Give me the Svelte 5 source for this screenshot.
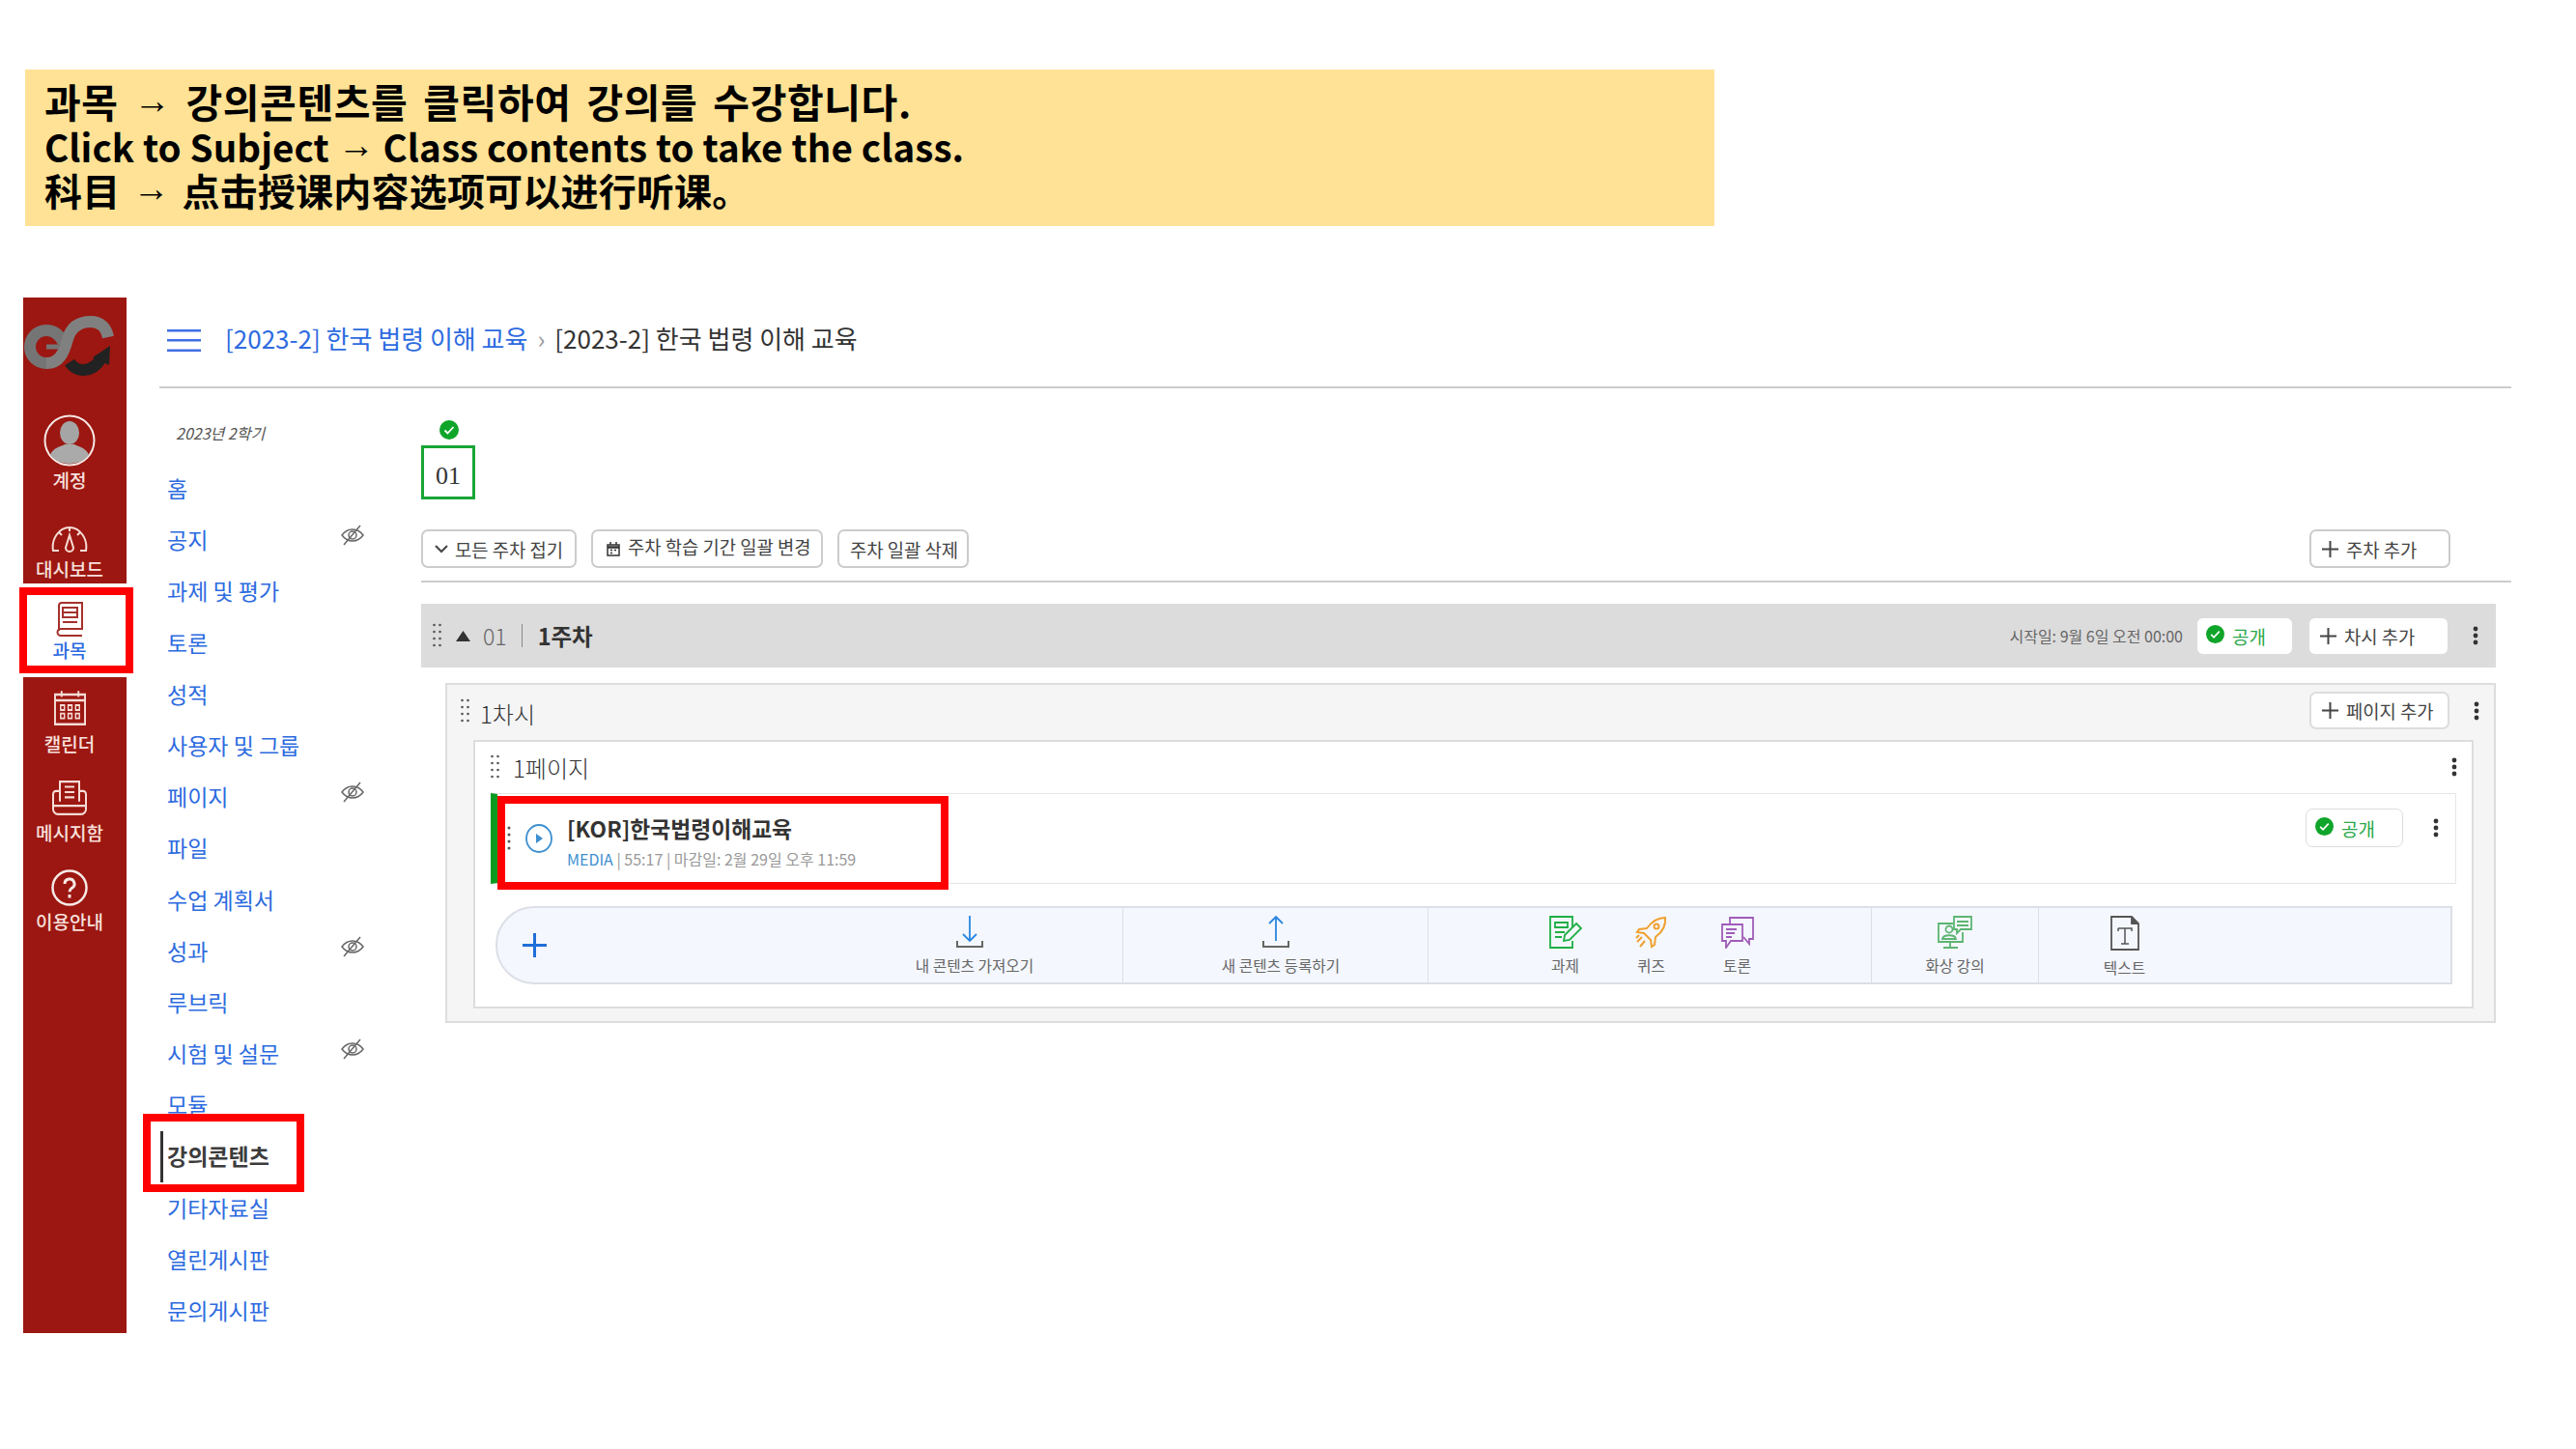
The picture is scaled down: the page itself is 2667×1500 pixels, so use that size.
<script lang="ts">
  const menu = [
    { label: "홈" },
    { label: "공지", hidden: true },
    { label: "과제 및 평가" },
    { label: "토론" },
    { label: "성적" },
    { label: "사용자 및 그룹" },
    { label: "페이지", hidden: true },
    { label: "파일" },
    { label: "수업 계획서" },
    { label: "성과", hidden: true },
    { label: "루브릭" },
    { label: "시험 및 설문", hidden: true },
    { label: "모듈" },
    { label: "강의콘텐츠", active: true },
    { label: "기타자료실" },
    { label: "열린게시판" },
    { label: "문의게시판" },
  ];
</script>

{#snippet handle()}
  <svg class="handle" width="9" height="26" viewBox="0 0 9 26" fill="#555">
    {#each [2, 9, 16, 23] as y}
      <circle cx="1.5" cy={y} r="1.3" /><circle cx="7.5" cy={y} r="1.3" />
    {/each}
  </svg>
{/snippet}

{#snippet kebab()}
  <svg class="kebab" width="6" height="20" viewBox="0 0 6 20" fill="#333">
    <circle cx="3" cy="3" r="2.4" /><circle cx="3" cy="10" r="2.4" /><circle cx="3" cy="17" r="2.4" />
  </svg>
{/snippet}

{#snippet check(size)}
  <svg width={size} height={size} viewBox="0 0 20 20">
    <circle cx="10" cy="10" r="10" fill="#0fa52a" />
    <path d="M5.5 10.5l3 3 6-6.5" fill="none" stroke="#fff" stroke-width="1.8" />
  </svg>
{/snippet}

{#snippet plus()}
  <svg width="17" height="17" viewBox="0 0 17 17" stroke="#444" stroke-width="2"><path d="M8.5 0v17M0 8.5h17" /></svg>
{/snippet}

{#snippet eye()}
  <svg width="24" height="22" viewBox="0 0 24 22" fill="none" stroke="#666" stroke-width="1.5">
    <path d="M1 11c3-4 7-6 11-6s8 2 11 6c-3 4-7 6-11 6s-8-2-11-6z" />
    <circle cx="12" cy="11" r="4" />
    <path d="M20 1L3 21" />
  </svg>
{/snippet}

<div class="page">
  <div class="banner">
    <p class="ko">과목 <span class="arrow">→</span> 강의콘텐츠를 클릭하여 강의를 수강합니다.</p>
    <p class="en">Click to Subject <span class="arrow">→</span> Class contents to take the class.</p>
    <p class="zh" lang="zh-CN">科目 <span class="arrow">→</span> 点击授课内容选项可以进行听课。</p>
  </div>

  <div class="app">
    <nav class="rail">
      <div class="logo">
        <svg width="96" height="70" viewBox="0 0 96 70" fill="none">
          <path d="M24 51A17 17 0 1 1 24 17C32 17 38 22 42 30" stroke="#757575" stroke-width="12" />
          <path d="M24 51C38 51 42 40 46 26C50 12 60 8 70 8C80 8 86 14 88 24" stroke="#808080" stroke-width="12" />
          <path d="M37 34H24" stroke="#757575" stroke-width="5" />
          <path d="M48 50C56 62 72 60 80 47" stroke="#222" stroke-width="12" />
          <path d="M72 45L90 33L89 53z" fill="#222" />
        </svg>
      </div>

      <div class="rail-item account">
        <svg width="54" height="54" viewBox="0 0 54 54">
          <circle cx="27" cy="27" r="25.5" fill="none" stroke="#f6e9e6" stroke-width="2" />
          <ellipse cx="27" cy="19" rx="10" ry="12" fill="#a5a5a5" />
          <path d="M7 42c3-8 12-9 15-11h10c3 2 12 3 15 11-5 6-12 9-20 9s-15-3-20-9z" fill="#aaa" />
        </svg>
        <span>계정</span>
      </div>

      <div class="rail-item dash">
        <svg width="38" height="28" viewBox="0 0 38 28" fill="none" stroke="#f6dcd6" stroke-width="2">
          <path d="M8 26H2C0 14 8 2 19 2s19 12 17 24h-6" />
          <path d="M19 10l4 13a4 4 0 0 1-8 0z" />
          <path d="M19 2v4M8 7l3 3M30 7l-3 3" />
        </svg>
        <span>대시보드</span>
      </div>

      <div class="rail-item course">
        <svg width="30" height="36" viewBox="0 0 30 36" fill="none" stroke="#a5312c" stroke-width="2">
          <path d="M4 30V4a3 3 0 0 1 3-3h21v27H6a3.500 3.500 0 0 0 0 7h22" />
          <path d="M8 6h15v10H8zM8 11h15M8 21h15" />
        </svg>
        <span>과목</span>
        <i class="mark"></i>
      </div>

      <div class="rail-item cal">
        <svg width="33" height="37" viewBox="0 0 34 30" preserveAspectRatio="none" fill="none" stroke="#f6dcd6" stroke-width="2">
          <path d="M1 4h32v25H1zM1 9h32M8 1v5M26 1v5" />
          <path d="M7 13h4v4H7zM15 13h4v4h-4zM23 13h4v4h-4zM7 20h4v4H7zM15 20h4v4h-4zM23 20h4v4h-4z" stroke-width="1.500" />
        </svg>
        <span>캘린더</span>
      </div>

      <div class="rail-item msg">
        <svg width="38" height="37" viewBox="0 0 38 34" preserveAspectRatio="none" fill="none" stroke="#f6dcd6" stroke-width="2">
          <path d="M9 20V1h20v19M14 6h10M14 11h10M14 16h10" />
          <path d="M9 10H5a3 3 0 0 0-3 3v14a5 5 0 0 0 5 5h24a5 5 0 0 0 5-5V13a3 3 0 0 0-3-3h-4" />
          <path d="M2 24h34" />
        </svg>
        <span>메시지함</span>
      </div>

      <div class="rail-item help">
        <svg width="38" height="38" viewBox="0 0 38 38" fill="none" stroke="#f6e9e6" stroke-width="2.500">
          <circle cx="19" cy="19" r="17.500" />
          <path d="M14 15a5 5 0 1 1 7.500 4.300c-1.500 1-2.500 2-2.500 4" stroke-width="3" />
          <path d="M19 26v3.500" stroke-width="3" />
        </svg>
        <span>이용안내</span>
      </div>
    </nav>

    <div class="main">
      <header class="crumbs">
        <svg class="burger" width="35" height="23" viewBox="0 0 35 23" fill="#3f6ee6">
          <rect width="35" height="2.500" /><rect y="10" width="35" height="2.500" /><rect y="20.500" width="35" height="2.500" />
        </svg>
        <span class="crumb-link">[2023-2] 한국 법령 이해 교육</span>
        <span class="crumb-sep">›</span>
        <span class="crumb-now">[2023-2] 한국 법령 이해 교육</span>
      </header>

      <div class="body">
        <aside class="menu">
          <div class="term">2023년 2학기</div>
          {#each menu as item}
            <div class="menu-item" class:active={item.active}>
              <span>{item.label}</span>
              {#if item.hidden}
                <span class="eye">{@render eye()}</span>
              {/if}
              {#if item.active}
                <i class="mark"></i>
              {/if}
            </div>
          {/each}
        </aside>

        <section class="content">
          <div class="week-nav">
            <span class="week-check">{@render check(20)}</span>
            <div class="week-tile">01</div>
          </div>

          <div class="actions">
            <button class="btn w1">
              <svg width="14" height="9" viewBox="0 0 14 9" fill="none" stroke="#444" stroke-width="2"><path d="M1 1l6 6 6-6" /></svg>
              모든 주차 접기
            </button>
            <button class="btn w2">
              <svg width="14" height="15" viewBox="0 0 14 15" fill="none" stroke="#333" stroke-width="1.500">
                <path d="M1 3h12v11H1zM4 0v3M10 0v3" /><path d="M1 5.500h12" stroke-width="2.500" />
                <path d="M4 8.500h2M8 8.500h2M4 11.500h2" />
              </svg>
              <span class="raised">주차 학습 기간 일괄 변경</span>
            </button>
            <button class="btn w3">주차 일괄 삭제</button>
            <button class="btn add add-week">{@render plus()} 주차 추가</button>
          </div>

          <div class="week-bar">
            {@render handle()}
            <svg class="caret" width="15" height="11" viewBox="0 0 15 11" fill="#333"><path d="M7.500 0L15 11H0z" /></svg>
            <span class="week-no">01</span>
            <span class="week-sep"></span>
            <strong>1주차</strong>
            <span class="start">시작일: 9월 6일 오전 00:00</span>
            <span class="badge">{@render check(19)} <em>공개</em></span>
            <button class="btn add row-add">{@render plus()} 차시 추가</button>
            {@render kebab()}
          </div>

          <div class="lesson">
            <div class="lesson-head">
              {@render handle()}
              <span class="lesson-title">1차시</span>
              <button class="btn add row-add">{@render plus()} 페이지 추가</button>
              {@render kebab()}
            </div>

            <div class="sheet">
              <div class="sheet-head">
                {@render handle()}
                <span class="lesson-title">1페이지</span>
                {@render kebab()}
              </div>

              <div class="item">
                <svg class="item-grip" width="4" height="26" viewBox="0 0 4 26" fill="#555">
                  {#each [2, 9, 16, 23] as y}<circle cx="2" cy={y} r="1.500" />{/each}
                </svg>
                <svg class="play" width="28" height="30" viewBox="0 0 28 30" fill="none">
                  <ellipse cx="14" cy="15" rx="13" ry="14" stroke="#3d8fd0" stroke-width="1.800" />
                  <path d="M11 10l7 5-7 5z" fill="#3d8fd0" />
                </svg>
                <div class="item-text">
                  <div class="item-title">[KOR]한국법령이해교육</div>
                  <div class="item-meta"><b>MEDIA</b> | 55:17 | 마감일: 2월 29일 오후 11:59</div>
                </div>
                <span class="badge item-badge">{@render check(19)} <em>공개</em></span>
                {@render kebab()}
                <i class="mark"></i>
              </div>

              <div class="tools">
                <div class="seg seg1">
                  <svg class="tool-plus" width="25" height="25" viewBox="0 0 25 25" stroke="#1f6fd8" stroke-width="3"><path d="M12.500 0v25M0 12.500h25" /></svg>
                  <div class="tool import">
                    <svg width="28" height="34" viewBox="0 0 28 34" fill="none" stroke="#2a86e0" stroke-width="1.800">
                      <path d="M14 0v26M7 19l7 7 7-7" />
                      <path d="M1 26v6h26v-6" stroke="#666" stroke-width="2" />
                    </svg>
                    <span>내 콘텐츠 가져오기</span>
                  </div>
                </div>
                <div class="seg seg2">
                  <div class="tool export">
                    <svg width="28" height="34" viewBox="0 0 28 34" fill="none" stroke="#2a86e0" stroke-width="1.800">
                      <path d="M14 26V1M7 8l7-7 7 7" />
                      <path d="M1 26v6h26v-6" stroke="#666" stroke-width="2" />
                    </svg>
                    <span>새 콘텐츠 등록하기</span>
                  </div>
                </div>
                <div class="seg seg3">
                  <div class="tool small">
                    <svg width="34" height="34" viewBox="0 0 34 34" fill="none" stroke="#1fae45" stroke-width="1.800">
                      <path d="M24 12V1H1v32h23v-7" />
                      <path d="M6 7h13v5H6zM6 17h10M6 22h7" />
                      <path d="M28 8l5 5-12 12-6 1 1-6z" />
                    </svg>
                    <span>과제</span>
                  </div>
                  <div class="tool small">
                    <svg width="34" height="34" viewBox="0 0 34 34" fill="none" stroke="#f0a030" stroke-width="2">
                      <path d="M31 2c-8 0-14 4-19 11l-8 1-2 3 7 1 7 7 1 7 3-2 1-8c7-5 11-11 10-20z" />
                      <circle cx="22" cy="11" r="2.500" />
                      <path d="M7 22l-5 5M10 26l-5 6M4 20l-3 3" />
                    </svg>
                    <span>퀴즈</span>
                  </div>
                  <div class="tool small">
                    <svg width="34" height="34" viewBox="0 0 34 34" fill="none" stroke="#a05cb8" stroke-width="1.800">
                      <path d="M1 9h21v17H10l-5 7v-7H1z" />
                      <path d="M9 9V2h24v22h-4v5l-6-7" />
                      <path d="M5 14h11M5 18h9M5 22h6" />
                    </svg>
                    <span>토론</span>
                  </div>
                </div>
                <div class="seg seg4">
                  <div class="tool small">
                    <svg width="36" height="34" viewBox="0 0 36 34" fill="none" stroke="#5cb572" stroke-width="1.800">
                      <path d="M16 8H1v19h25V17" />
                      <path d="M17 1h18v13H24l-4 4v-4h-3z" />
                      <path d="M20 6h12M20 10h12" />
                      <circle cx="12" cy="14" r="3.500" />
                      <path d="M5 24c1-5 13-5 14 0zM13 27v5M6 33h15" />
                    </svg>
                    <span>화상 강의</span>
                  </div>
                </div>
                <div class="seg seg5">
                  <div class="tool small">
                    <svg width="30" height="36" viewBox="0 0 30 36" fill="none" stroke="#555" stroke-width="1.800">
                      <path d="M1 1h21l7 7v27H1z" />
                      <path d="M22 1v7h7" fill="#555" />
                      <path d="M8 13h14v3M8 16v-3M15 13v16M11 29h8" stroke-width="1.500" />
                    </svg>
                    <span>텍스트</span>
                  </div>
                </div>
              </div>
            </div>
          </div>
        </section>
      </div>
    </div>
  </div>
</div>

<style>
  :global(body) {
    margin: 0;
    background: #fff;
  }

  .page {
    width: 2667px;
    height: 1500px;
    overflow: hidden;
    font-family: "Noto Sans CJK KR", "Noto Sans", sans-serif;
    color: #333;
    padding-top: 72px;
    box-sizing: border-box;
  }

  .banner {
    width: 1749px;
    height: 162px;
    margin-left: 26px;
    padding: 9px 0 0 20px;
    box-sizing: border-box;
    background: #ffe295;
    color: #000;
    font-size: 41px;
    font-weight: 700;
  }

  .banner p {
    margin: 0;
    height: 47px;
    line-height: 47px;
    white-space: nowrap;
  }

  .banner .arrow {
    position: relative;
    top: -5px;
    font-family: "Liberation Sans", sans-serif;
    font-size: 38px;
    font-weight: 700;
    letter-spacing: 0;
  }

  .banner .ko {
    word-spacing: 6px;
    letter-spacing: 0.6px;
  }

  .banner .en {
    font-size: 38.500px;
    letter-spacing: 0.1px;
  }

  .banner .zh {
    margin-top: -2px;
    font-family: "Noto Sans CJK SC", sans-serif;
    font-size: 39px;
    font-weight: 700;
    word-spacing: 4px;
    letter-spacing: 0.2px;
  }

  .app {
    display: flex;
    height: 1072px;
    margin: 74px 0 0 24px;
  }

  /* left red rail */
  .rail {
    width: 107px;
    flex-shrink: 0;
    background: #9c1711;
    display: flex;
    flex-direction: column;
  }

  .logo {
    height: 85px;
    padding-top: 17px;
    box-sizing: border-box;
    margin-bottom: 36px;
  }

  .logo svg {
    display: block;
  }

  .rail-item {
    position: relative;
    display: flex;
    flex-direction: column;
    align-items: center;
    padding-right: 11px;
    box-sizing: border-box;
    color: #f8e0dc;
    font-size: 19px;
    line-height: 24px;
    font-weight: 500;
  }

  .rail-item svg {
    display: block;
  }

  .account {
    height: 115px;
  }

  .account span {
    margin-top: 2px;
  }

  .dash {
    height: 60px;
  }

  .dash span {
    margin-top: 5px;
  }

  .course {
    height: 97px;
    padding-top: 19px;
    background: #fff;
    color: #2d6be0;
  }

  .course span {
    margin-top: 2px;
  }

  .course .mark {
    inset: 4px -7px 4px -4px;
  }

  .cal {
    height: 93px;
    padding-top: 13px;
  }

  .cal span {
    margin-top: 7px;
  }

  .msg {
    height: 93px;
    padding-top: 14px;
  }

  .msg span {
    margin-top: 5px;
  }

  .help {
    padding-top: 13px;
  }

  .help span {
    margin-top: 4px;
  }

  /* red annotation frames */
  .mark {
    position: absolute;
    border: 8px solid #f00;
    pointer-events: none;
    box-sizing: border-box;
  }

  .main {
    width: 2435px;
    margin-left: 34px;
    flex-shrink: 0;
  }

  .crumbs {
    height: 94px;
    box-sizing: border-box;
    border-bottom: 2px solid #ccc;
    display: flex;
    align-items: center;
    padding: 0 0 4px 8px;
    font-size: 26px;
    font-weight: 400;
    white-space: nowrap;
  }

  .crumbs span {
    margin-bottom: 6px;
  }

  .burger {
    margin-right: 25px;
  }

  .crumb-link {
    color: #2d6be0;
  }

  .crumb-sep {
    margin: 0 10px 6px 10px;
    color: #999;
  }

  .crumb-now {
    color: #333;
  }

  .body {
    display: flex;
  }

  .menu {
    width: 271px;
    flex-shrink: 0;
    padding-left: 8px;
    box-sizing: border-box;
  }

  .term {
    height: 77px;
    padding: 34px 0 0 9px;
    box-sizing: border-box;
    font-size: 16px;
    line-height: 24px;
    font-style: italic;
    color: #555;
  }

  .menu-item {
    position: relative;
    height: 53.200px;
    line-height: 53.200px;
    font-size: 23px;
    color: #2d6be0;
    white-space: nowrap;
  }

  .menu-item.active {
    color: #3c3c3c;
    font-weight: 700;
  }

  .menu-item.active::before {
    content: "";
    position: absolute;
    left: -7px;
    top: 1px;
    bottom: 0;
    width: 3px;
    background: #333;
  }

  .menu-item .mark {
    left: -25px;
    top: -17px;
    width: 167px;
    height: 81px;
  }

  .eye {
    position: absolute;
    left: 180px;
    top: 11px;
    line-height: 0;
  }

  .content {
    flex: 1;
    min-width: 0;
  }

  .week-nav {
    padding-top: 33px;
  }

  .week-check {
    display: block;
    width: 20px;
    height: 20px;
    margin: 0 0 6px 19px;
  }

  .week-check svg {
    display: block;
  }

  .week-tile {
    width: 56px;
    height: 56px;
    box-sizing: border-box;
    border: 3px solid #19a536;
    font-family: "Liberation Serif", serif;
    font-size: 26px;
    color: #333;
    display: flex;
    align-items: center;
    justify-content: center;
    padding-top: 8px;
  }

  .actions {
    display: flex;
    margin-top: 31px;
    padding-bottom: 13px;
    border-bottom: 2px solid #ccc;
  }

  .btn {
    height: 40px;
    box-sizing: border-box;
    background: #fff;
    border: 2px solid #ccc;
    border-radius: 7px;
    font-family: inherit;
    font-size: 18.800px;
    font-weight: 400;
    color: #444;
    display: flex;
    align-items: center;
    padding: 0;
    white-space: nowrap;
  }

  .w1 {
    width: 161px;
    padding-left: 12px;
    gap: 7px;
  }

  .w2 {
    width: 240px;
    margin-left: 15px;
    padding-left: 14px;
    gap: 8px;
  }

  .raised {
    position: relative;
    top: -3px;
  }

  .w3 {
    width: 136px;
    margin-left: 15px;
    padding-left: 11px;
  }

  .add {
    gap: 8px;
    padding-left: 11px;
  }

  .add svg {
    flex-shrink: 0;
  }

  .add-week {
    width: 146px;
    margin-left: auto;
    margin-right: 63px;
  }

  .week-bar {
    height: 66px;
    margin: 22px 16px 0 0;
    background: #dcdcdc;
    display: flex;
    align-items: center;
    padding: 0 18px 0 12px;
    box-sizing: border-box;
  }

  .handle {
    flex-shrink: 0;
  }

  .caret {
    margin-left: 15px;
  }

  .week-no {
    margin-left: 13px;
    font-size: 23px;
    color: #666;
    font-weight: 300;
  }

  .week-sep {
    width: 1px;
    height: 24px;
    background: #888;
    margin: 0 16px 0 15px;
  }

  .week-bar strong {
    font-size: 23.500px;
    font-weight: 700;
    color: #333;
  }

  .start {
    margin-left: auto;
    font-size: 16px;
    color: #666;
    white-space: nowrap;
  }

  .badge {
    width: 100px;
    height: 39px;
    box-sizing: border-box;
    margin-left: 14px;
    background: #fff;
    border: 1px solid #ddd;
    border-radius: 7px;
    display: flex;
    align-items: center;
    padding-left: 9px;
    gap: 8px;
  }

  .badge svg {
    margin-top: -4px;
  }

  .badge em {
    font-style: normal;
    font-size: 19px;
    color: #2aa84a;
  }

  .row-add {
    width: 145px;
    height: 39px;
    margin-left: 16px;
    border-width: 1px;
    border-color: #ddd;
  }

  .kebab {
    flex-shrink: 0;
    margin-left: 25px;
  }

  .lesson {
    margin: 16px 16px 0 25px;
    height: 352px;
    box-sizing: border-box;
    background: #f5f5f5;
    border: 2px solid #ddd;
  }

  .lesson-head {
    height: 57px;
    display: flex;
    align-items: center;
    padding: 0 15px 4px 14px;
    box-sizing: border-box;
  }

  .lesson-head .row-add {
    margin-left: auto;
    border-width: 2px;
  }

  .lesson-title {
    margin-left: 11px;
    padding-top: 6px;
    font-size: 24px;
    font-weight: 300;
    color: #333;
  }

  .sheet {
    height: 278px;
    margin: 0 21px 0 27px;
    box-sizing: border-box;
    background: #fff;
    border: 2px solid #ddd;
  }

  .sheet-head {
    height: 53px;
    display: flex;
    align-items: center;
    padding: 0 15px 2px 16px;
    box-sizing: border-box;
  }

  .sheet-head .lesson-title {
    margin-left: 14px;
    padding-top: 2px;
  }

  .sheet-head .kebab {
    margin-left: auto;
  }

  .item {
    position: relative;
    height: 94px;
    margin: 0 16px;
    box-sizing: border-box;
    border: 1px solid #e6e6e6;
    border-left: 7px solid #0b9a20;
    display: flex;
    align-items: center;
    padding-right: 17px;
  }

  .item-grip {
    margin-left: 10px;
    flex-shrink: 0;
  }

  .play {
    margin-left: 15px;
    flex-shrink: 0;
  }

  .item-text {
    margin-left: 15px;
    padding-top: 6px;
  }

  .item-title {
    font-size: 22.800px;
    line-height: 33px;
    margin-bottom: 3px;
    font-weight: 700;
    color: #333;
    white-space: nowrap;
  }

  .item-meta {
    font-size: 16px;
    line-height: 24px;
    color: #999;
    white-space: nowrap;
  }

  .item-meta b {
    font-weight: 400;
    color: #3d8fd0;
  }

  .item-badge {
    margin: -22px 0 0 auto;
    width: 101px;
    height: 40px;
  }

  .item-badge + .kebab {
    margin: -22px 0 0 31px;
  }

  .item .mark {
    left: 0;
    top: 2px;
    width: 467px;
    height: 97px;
  }

  .tools {
    height: 81px;
    margin: 23px 20px 0 21px;
    box-sizing: border-box;
    background: #f4f7fd;
    border: 2px solid #dcdfe6;
    border-radius: 40px 0 0 40px;
    display: flex;
    font-size: 15.700px;
    color: #666;
  }

  .seg {
    display: flex;
    align-items: stretch;
    box-sizing: border-box;
    border-right: 1px solid #dcdfe6;
    flex-shrink: 0;
  }

  .seg1 {
    width: 648px;
    align-items: center;
    padding-left: 26px;
  }

  .seg2 {
    width: 316px;
    padding-left: 63px;
  }

  .seg3 {
    width: 459px;
    padding-left: 97px;
  }

  .seg4 {
    width: 173px;
    justify-content: center;
  }

  .seg5 {
    border-right: 0;
    padding-left: 44px;
  }

  .tool {
    display: flex;
    flex-direction: column;
    align-items: center;
    width: 200px;
    padding-top: 8px;
    box-sizing: border-box;
    white-space: nowrap;
    align-self: stretch;
  }

  .tool span {
    margin-top: 7px;
    line-height: 22px;
  }

  .tool.small {
    width: 89px;
  }

  .tool svg {
    display: block;
  }

  .import {
    margin-left: auto;
    margin-right: 53px;
  }

  .import svg,
  .export svg {
    transform: translateX(-5px);
  }
</style>
